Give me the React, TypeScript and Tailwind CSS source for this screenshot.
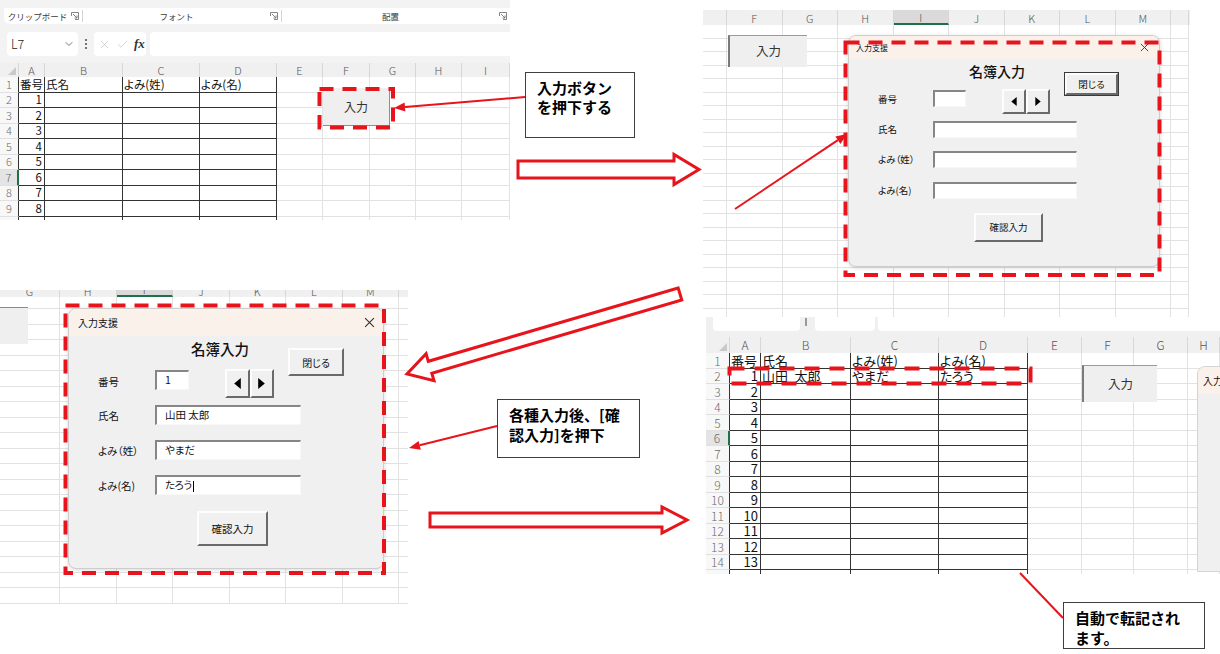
import React from 'react';
import { ChevronDown, X, Check } from 'lucide-react';

type Pt = [number, number];
type FormSize = 'sm' | 'md';

const RED = '#e8141c';

// outline of a hollow block arrow running from tail to tip
function blockArrow(tail: Pt, tip: Pt, shaft: number, head: number, headLen: number) {
  const [x1, y1] = tail;
  const [x2, y2] = tip;
  const len = Math.hypot(x2 - x1, y2 - y1);
  const ux = (x2 - x1) / len;
  const uy = (y2 - y1) / len;
  const nx = -uy;
  const ny = ux;
  const bx = x2 - ux * headLen;
  const by = y2 - uy * headLen;
  const at = (x: number, y: number, k: number) => `${(x + nx * k).toFixed(1)},${(y + ny * k).toFixed(1)}`;
  return [
    at(x1, y1, shaft / 2),
    at(bx, by, shaft / 2),
    at(bx, by, head / 2),
    `${x2},${y2}`,
    at(bx, by, -head / 2),
    at(bx, by, -shaft / 2),
    at(x1, y1, -shaft / 2),
  ].join(' ');
}

const Pointer = ({ from, to, head = true }: { from: Pt; to: Pt; head?: boolean }) => {
  const [x1, y1] = from;
  const [x2, y2] = to;
  const len = Math.hypot(x2 - x1, y2 - y1);
  const ux = (x2 - x1) / len;
  const uy = (y2 - y1) / len;
  const bx = x2 - ux * 11;
  const by = y2 - uy * 11;
  const wing = (k: number) => `${(bx - uy * k).toFixed(1)},${(by + ux * k).toFixed(1)}`;
  return (
    <g>
      <line x1={x1} y1={y1} x2={head ? bx : x2} y2={head ? by : y2} stroke={RED} strokeWidth={2} />
      {head && <polygon points={`${x2},${y2} ${wing(4.5)} ${wing(-4.5)}`} fill={RED} />}
    </g>
  );
};

const Annotations = () => (
  <svg className="pointer-events-none absolute inset-0" width={1220} height={654} viewBox="0 0 1220 654">
    <g fill="none" stroke={RED} strokeWidth={4} strokeDasharray="14 9">
      <rect x={319.5} y={89} width={73.5} height={38.5} />
      <rect x={845.5} y={42.5} width={314} height={232.5} />
      <rect x={65.5} y={305.5} width={318.5} height={267.5} />
      <rect x={729.5} y={368.5} width={301} height={15} strokeDasharray="15 10" />
    </g>
    <g fill="white" stroke={RED} strokeWidth={3}>
      <polygon points={blockArrow([518, 169.5], [699, 169.5], 17, 30, 25)} />
      <polygon points={blockArrow([680, 294], [407, 374], 12.5, 28, 24)} />
      <polygon points={blockArrow([430, 520], [687, 520], 14, 26, 25)} />
    </g>
    <Pointer from={[525, 97]} to={[394, 108]} />
    <Pointer from={[735, 209]} to={[847, 134]} />
    <Pointer from={[497, 426]} to={[409, 448]} />
    <Pointer from={[1020, 573]} to={[1063, 618]} head={false} />
  </svg>
);

const Note = ({ className, lines }: { className: string; lines: string[] }) => (
  <div className={`absolute border border-[#3f3f3f] bg-white pl-[11px] pt-[5px] text-[15px] font-bold leading-[19px] text-black ${className}`}>
    {lines.map((l) => (
      <div key={l}>{l}</div>
    ))}
  </div>
);

/* ---------- spreadsheet pieces ---------- */

const Corner = () => (
  <svg width="8" height="8" viewBox="0 0 8 8" className="mb-[2px] ml-auto mr-[2px] mt-auto">
    <polygon points="8,0 8,8 0,8" fill="#c9c9c9" />
  </svg>
);

const ColHeader = ({
  widths,
  letters,
  sel = -1,
  h,
  text,
  align = 'items-center',
  corner = false,
}: {
  widths: string[];
  letters: string[];
  sel?: number;
  h: string;
  text: string;
  align?: string;
  corner?: boolean;
}) => (
  <div className={`flex shrink-0 overflow-hidden bg-[#f0f0f0] ${h}`}>
    {widths.map((w, c) => (
      <div
        key={c}
        className={`${w} flex shrink-0 justify-center border-r border-[#d7d7d7] font-light leading-[12px] text-[#555] ${align} ${text} ${
          c === sel ? 'border-b-2 border-b-[#1e7145] bg-[#dadada]' : ''
        }`}
      >
        {corner && c === 0 ? <Corner /> : letters[c]}
      </div>
    ))}
  </div>
);

const PlainRows = ({ widths, count, rowH }: { widths: string[]; count: number; rowH: string }) => (
  <>
    {Array.from({ length: count }, (_, r) => (
      <div key={r} className={`flex shrink-0 ${rowH}`}>
        {widths.map((w, c) => (
          <div key={c} className={`${w} shrink-0 border-r border-b border-[#e2e2e2]`} />
        ))}
      </div>
    ))}
  </>
);

// bordered list A..D with row numbers down the left
const DataRows = ({
  widths,
  rows,
  selRow,
  cellText,
  rowText,
}: {
  widths: string[];
  rows: string[][];
  selRow: number;
  cellText: string;
  rowText: string;
}) => (
  <>
    {rows.map((r, i) => (
      <div key={i} className="flex h-[15.5px] shrink-0">
        {widths.map((w, c) => {
          if (c === 0)
            return (
              <div
                key={c}
                className={`${w} flex shrink-0 items-center justify-center border-b border-b-[#e0e0e0] font-light leading-[13px] text-[#6a6a6a] ${rowText} ${
                  i === selRow ? 'border-r-2 border-r-[#1e7145] bg-[#e4e4e4]' : 'border-r border-r-[#333] bg-[#f8f8f8]'
                }`}
              >
                {r[0]}
              </div>
            );
          const table = c <= 4;
          const right = c === 1 && i > 0;
          return (
            <div
              key={c}
              className={`${w} flex shrink-0 items-center whitespace-nowrap border-r border-b bg-white leading-[13px] text-[#111] ${cellText} ${
                table ? 'border-[#333]' : 'border-[#e2e2e2]'
              } ${right ? 'justify-end pr-[2px]' : 'pl-[1px]'}`}
            >
              {r[c] ?? ''}
            </div>
          );
        })}
      </div>
    ))}
  </>
);

const Launcher = () => (
  <svg width="8" height="8" viewBox="0 0 8 8" className="mr-[3px] shrink-0">
    <path d="M0.5 4V0.5H7.5V7.5H4" fill="none" stroke="#777" strokeWidth="0.9" />
    <path d="M2 2L6 6M6 3.5V6H3.5" fill="none" stroke="#777" strokeWidth="0.9" />
  </svg>
);

const Dots = () => (
  <svg width="4" height="12" viewBox="0 0 4 12" className="shrink-0">
    <circle cx="2" cy="2" r="1.1" fill="#555" />
    <circle cx="2" cy="6" r="1.1" fill="#555" />
    <circle cx="2" cy="10" r="1.1" fill="#555" />
  </svg>
);

/* ---------- userform ---------- */

const FORM = {
  sm: {
    frame: 'h-[232px] w-[312px]',
    title: 'h-[23px] pl-[7px] pr-[10px] text-[8px]',
    x: 'h-[9px] w-[9px]',
    body: 'pl-[29px] pt-[13px]',
    rowA: 'h-[24px]',
    spacer: 'w-[90px]',
    heading: 'w-[58px] -mt-[9px] text-[14px] leading-[16px]',
    close: 'ml-[38px] h-[24px] w-[55px] text-[9.5px]',
    rowB: '-mt-[7px] h-[25px]',
    label: 'w-[55px] text-[9.5px] leading-[17px]',
    numLabel: 'mt-[2px]',
    numBox: 'mt-[1px] h-[17px] w-[33px]',
    spin: 'ml-[36px] h-[25px] w-[48px]',
    tri: 'h-[9px] w-[6px]',
    field: 'h-[17px] w-[144px]',
    gaps: ['mt-[7px]', 'mt-[13px]', 'mt-[14px]'],
    ok: 'ml-[96px] mt-[14px] h-[29px] w-[69px] text-[9.5px]',
    value: 'pl-[8px] text-[9.5px] leading-[13px]',
  },
  md: {
    frame: 'h-[261px] w-[316px]',
    title: 'h-[27px] pl-[9px] pr-[8px] text-[10px]',
    x: 'h-[11px] w-[11px]',
    body: 'pl-[29px] pt-[12px]',
    rowA: 'h-[28px]',
    spacer: 'w-[93px]',
    heading: 'w-[58px] -mt-[7px] text-[14.5px] leading-[16px]',
    close: 'ml-[39px] h-[28px] w-[56px] text-[10px]',
    rowB: '-mt-[7px] h-[29px]',
    label: 'w-[57px] text-[10.5px] leading-[19px]',
    numLabel: 'mt-[3px]',
    numBox: 'mt-[1px] h-[20px] w-[34px]',
    spin: 'ml-[36px] h-[29px] w-[49px]',
    tri: 'h-[11px] w-[7px]',
    field: 'h-[20px] w-[146px]',
    gaps: ['mt-[7px]', 'mt-[15px]', 'mt-[15px]'],
    ok: 'ml-[99px] mt-[16px] h-[35px] w-[71px] text-[10.5px]',
    value: 'pl-[8px] text-[10.5px] leading-[15px]',
  },
};

const RAISED = 'border-2 border-t-[#fdfdfd] border-l-[#fdfdfd] border-r-[#6a6a6a] border-b-[#6a6a6a] bg-[#f0f0f0]';
const SUNKEN =
  'border-t-2 border-l-2 border-t-[#868686] border-l-[#868686] border-r border-b border-r-[#f7f7f7] border-b-[#f7f7f7] bg-white';

const CloseGlyph = ({ className }: { className: string }) => (
  <svg viewBox="0 0 10 10" className={className}>
    <path d="M1 1L9 9M9 1L1 9" stroke="#333" strokeWidth="1" />
  </svg>
);

const Tri = ({ dir, className }: { dir: 'l' | 'r'; className: string }) => (
  <svg viewBox="0 0 6 10" className={className}>
    <polygon points={dir === 'l' ? '6,0 6,10 0,5' : '0,0 0,10 6,5'} fill="#000" />
  </svg>
);

function UserForm({ size, values, className }: { size: FormSize; values?: string[]; className: string }) {
  const f = FORM[size];
  const labels = ['氏名', 'よみ（姓）', 'よみ(名)'];
  return (
    <div
      className={`${className} ${f.frame} flex flex-col overflow-hidden rounded-[8px] border border-[#cdcdcd] bg-[#f0f0f0] text-[#111] shadow-[0_1px_4px_rgba(0,0,0,0.15)] [font-feature-settings:'palt']`}
    >
      <div className={`flex shrink-0 items-center justify-between bg-[#fbf1eb] ${f.title}`}>
        <span>入力支援</span>
        <CloseGlyph className={f.x} />
      </div>
      <div className={`flex flex-col ${f.body}`}>
        <div className={`flex items-start ${f.rowA}`}>
          <div className={f.spacer} />
          <div className={`text-center font-medium ${f.heading}`}>名簿入力</div>
          <div className={`${f.close} ${size === 'sm' ? 'border border-[#3a3a3a]' : ''} flex`}>
            <div className={`flex flex-1 items-center justify-center ${RAISED}`}>閉じる</div>
          </div>
        </div>
        <div className={`flex items-start ${f.rowB}`}>
          <div className={`${f.label} ${f.numLabel}`}>番号</div>
          <div className={`${f.numBox} ${SUNKEN} ${f.value}`}>{values?.[0]}</div>
          <div className={`flex ${f.spin}`}>
            <div className={`flex flex-1 items-center justify-center ${RAISED}`}>
              <Tri dir="l" className={f.tri} />
            </div>
            <div className={`flex flex-1 items-center justify-center ${RAISED}`}>
              <Tri dir="r" className={f.tri} />
            </div>
          </div>
        </div>
        {labels.map((l, i) => (
          <div key={l} className={`flex items-center ${f.gaps[i]}`}>
            <div className={f.label}>{l}</div>
            <div className={`${f.field} ${SUNKEN} ${f.value} whitespace-nowrap`}>
              {values?.[i + 1]}
              {values && i === 2 && <span className="ml-px inline-block h-[11px] w-px bg-black align-middle" />}
            </div>
          </div>
        ))}
        <div className={`flex items-center justify-center ${RAISED} ${f.ok}`}>確認入力</div>
      </div>
    </div>
  );
}

/* ---------- the four sheet views ---------- */

const S1_W = ['w-[19px]', 'w-[26px]', 'w-[78px]', 'w-[77px]', 'w-[77px]', 'w-[46px]', 'w-[47px]', 'w-[46px]', 'w-[46px]', 'w-[48px]'];
const S1_ROWS = [
  ['1', '番号', '氏名', 'よみ(姓)', 'よみ(名)'],
  ...Array.from({ length: 8 }, (_, i) => [String(i + 2), String(i + 1)]),
  ['', ''],
];

function StartSheet() {
  return (
    <div className="absolute left-0 top-0 flex h-[220px] w-[510px] flex-col overflow-hidden bg-[#f3f3f3]">
      <div className="ml-[4px] mt-[8px] flex h-[16px] shrink-0 items-center rounded-bl-[6px] bg-white text-[8.5px] leading-[10px] text-[#3a3a3a]">
        <div className="flex w-[78px] items-center">
          <span className="flex-1 text-center">クリップボード</span>
          <Launcher />
        </div>
        <div className="h-[12px] w-px bg-[#d4d4d4]" />
        <div className="flex w-[198px] items-center">
          <span className="flex-1 text-center">フォント</span>
          <Launcher />
        </div>
        <div className="h-[12px] w-px bg-[#d4d4d4]" />
        <div className="flex flex-1 items-center">
          <span className="flex-1 text-center">配置</span>
          <Launcher />
        </div>
      </div>
      <div className="mt-[8px] flex h-[24px] shrink-0 items-center pl-[7px]">
        <div className="flex h-full w-[71px] items-center justify-between rounded-[4px] bg-white pl-[4px] pr-[3px] text-[12.5px] font-light text-[#222]">
          L7
          <ChevronDown size={12} strokeWidth={1.6} color="#555" />
        </div>
        <div className="ml-[6px]">
          <Dots />
        </div>
        <div className="ml-[6px] flex h-full w-[52px] items-center gap-[5px] rounded-[4px] bg-white pl-[4px]">
          <X size={13} strokeWidth={1.2} color="#bdbdbd" />
          <Check size={13} strokeWidth={1.2} color="#bdbdbd" />
          <span className="text-[13px] font-bold italic text-[#333] [font-family:'Liberation_Serif',serif]">fx</span>
        </div>
        <div className="ml-[4px] h-full flex-1 rounded-l-[4px] bg-white" />
      </div>
      <div className="mt-[7px] flex flex-col">
        <ColHeader widths={S1_W} letters={['', 'A', 'B', 'C', 'D', 'E', 'F', 'G', 'H', 'I']} h="h-[14px]" text="text-[11px]" corner />
        <DataRows widths={S1_W} rows={S1_ROWS} selRow={6} cellText="text-[11.5px] [font-feature-settings:'palt']" rowText="text-[11px]" />
      </div>
      <div className="absolute left-[323px] top-[88px] flex h-[38px] w-[67px] items-center justify-center border-r border-b border-[#8f8f8f] bg-[#efefef] text-[12px] text-[#333]">
        入力
      </div>
    </div>
  );
}

const S2_W = ['w-[24px]', ...Array(8).fill('w-[55.5px]'), 'w-[18px]'];

function FormOpenShot() {
  return (
    <div className="absolute left-[703px] top-0 flex h-[318px] w-[487px] flex-col overflow-hidden bg-white pt-[10px]">
      <ColHeader widths={S2_W} letters={['', 'F', 'G', 'H', 'I', 'J', 'K', 'L', 'M', '']} sel={4} h="h-[15px]" text="text-[11px]" />
      <PlainRows widths={S2_W} count={22} rowH="h-[13.5px]" />
      <div className="absolute left-[25px] top-[35px] flex h-[32px] w-[79px] items-center justify-center border-l-2 border-t border-l-[#7a7a7a] border-t-[#9a9a9a] bg-[#efefef] text-[12.5px] text-[#333]">
        入力
      </div>
      <UserForm size="sm" className="absolute left-[145px] top-[35px]" />
    </div>
  );
}

const S3_W = ['w-[60px]', ...Array(6).fill('w-[56.5px]'), 'w-[10px]'];

function FormFilledShot() {
  return (
    <div className="absolute left-0 top-[290px] flex h-[316px] w-[408px] flex-col overflow-hidden bg-white">
      <ColHeader
        widths={S3_W}
        letters={['G', 'H', 'I', 'J', 'K', 'L', 'M', '']}
        sel={2}
        h="h-[7px]"
        text="text-[11px]"
        align="items-end"
      />
      <PlainRows widths={S3_W} count={1} rowH="h-[12px]" />
      <PlainRows widths={S3_W} count={19} rowH="h-[15.5px]" />
      <div className="absolute left-0 top-[17px] h-[37px] w-[28px] border-t border-[#8a8a8a] bg-[#efefef]" />
      <UserForm size="md" values={['1', '山田 太郎', 'やまだ', 'たろう']} className="absolute left-[68px] top-[18px]" />
    </div>
  );
}

const S4_W = ['w-[24px]', 'w-[31px]', 'w-[90px]', 'w-[88px]', 'w-[89px]', 'w-[54px]', 'w-[52px]', 'w-[54px]', 'w-[32px]'];
const S4_ROWS = [
  ['1', '番号', '氏名', 'よみ(姓)', 'よみ(名)'],
  ['2', '1', '山田\u2002太郎', 'やまだ', 'たろう'],
  ...Array.from({ length: 12 }, (_, i) => [String(i + 3), String(i + 2)]),
  ['', ''],
];

function ResultSheet() {
  return (
    <div className="absolute left-[706px] top-[317px] flex h-[257px] w-[514px] flex-col overflow-hidden bg-white">
      <div className="flex h-[20px] shrink-0 items-start bg-[#f0f0f0] pl-[7px]">
        <div className="h-[14px] w-[87px] rounded-b-[4px] bg-white" />
        <div className="ml-[5px] mt-[1px] h-[8px] w-[2px] bg-[#9a9a9a]" />
        <div className="ml-[8px] h-[14px] w-[60px] rounded-b-[4px] bg-white" />
        <div className="ml-[3px] h-[14px] flex-1 rounded-bl-[4px] bg-white" />
      </div>
      <ColHeader widths={S4_W} letters={['', 'A', 'B', 'C', 'D', 'E', 'F', 'G', 'H']} h="h-[16px]" text="text-[12px]" corner />
      <DataRows widths={S4_W} rows={S4_ROWS} selRow={5} cellText="text-[13px] [font-feature-settings:'palt']" rowText="text-[12px]" />
      <div className="absolute left-[376px] top-[48px] flex h-[37px] w-[75px] items-center justify-center border-l-2 border-t border-l-[#7a7a7a] border-t-[#9a9a9a] bg-[#efefef] text-[12.5px] text-[#333]">
        入力
      </div>
      <div className="absolute left-[491px] top-[49px] flex h-[206px] w-[40px] flex-col overflow-hidden rounded-tl-[8px] border border-[#d4d4d4] bg-[#f0f0f0]">
        <div className="flex h-[27px] shrink-0 items-center whitespace-nowrap bg-[#fbf1eb] pl-[5px] text-[10px] text-[#111]">入力支援</div>
      </div>
    </div>
  );
}

export default function App() {
  return (
    <div className="relative h-[654px] w-[1220px] overflow-hidden bg-white [font-family:'Noto_Sans_CJK_JP','Noto_Sans',sans-serif]">
      <StartSheet />
      <FormOpenShot />
      <FormFilledShot />
      <ResultSheet />
      <Annotations />
      <Note className="left-[525px] top-[72px] h-[66px] w-[110px]" lines={['入力ボタン', 'を押下する']} />
      <Note className="left-[497px] top-[399px] h-[59px] w-[143px] leading-[20px]" lines={['各種入力後、[確', '認入力]を押下']} />
      <Note className="left-[1063px] top-[602px] h-[47px] w-[142px] leading-[20px]" lines={['自動で転記され', 'ます。']} />
    </div>
  );
}
